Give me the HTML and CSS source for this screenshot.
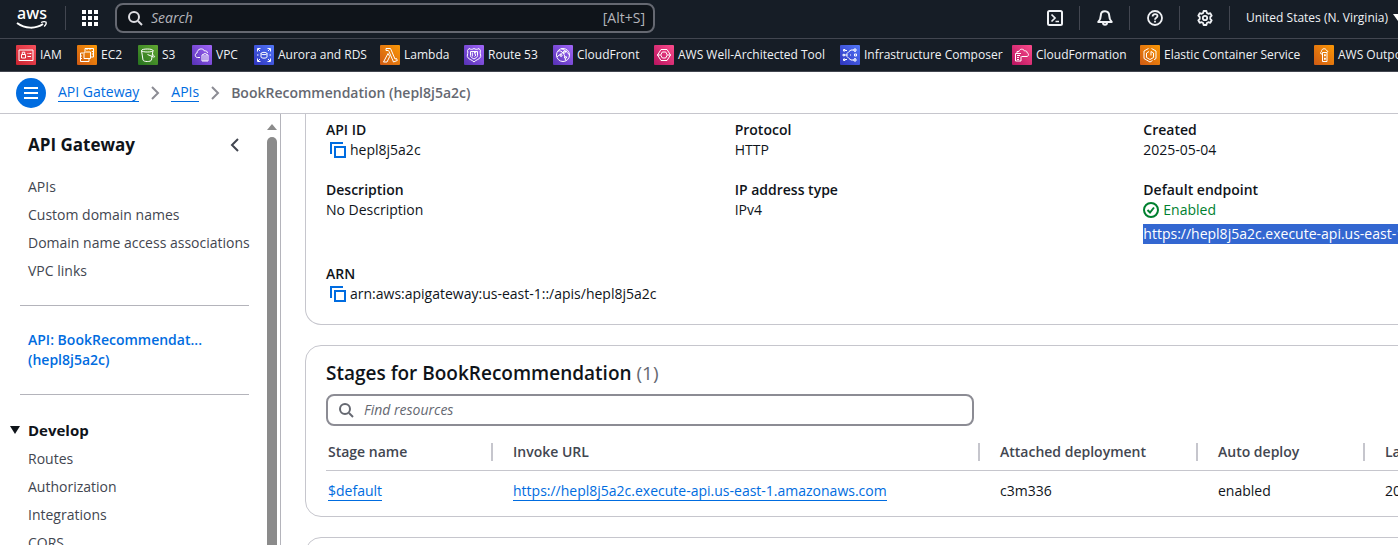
FILE: index.html
```html
<!DOCTYPE html>
<html lang="en">
<head>
<meta charset="utf-8">
<title>API Gateway - BookRecommendation</title>
<link rel="stylesheet" href="styles.css">
</head>
<body>
<svg class="defs" width="0" height="0" aria-hidden="true">
  <defs>
    <linearGradient id="g-red" x1="0" y1="1" x2="1" y2="0"><stop offset="0" stop-color="#c8232f"/><stop offset="1" stop-color="#f8505c"/></linearGradient>
    <linearGradient id="g-orange" x1="0" y1="1" x2="1" y2="0"><stop offset="0" stop-color="#cf5a14"/><stop offset="1" stop-color="#fb9806"/></linearGradient>
    <linearGradient id="g-green" x1="0" y1="1" x2="1" y2="0"><stop offset="0" stop-color="#26721f"/><stop offset="1" stop-color="#62a832"/></linearGradient>
    <linearGradient id="g-purple" x1="0" y1="1" x2="1" y2="0"><stop offset="0" stop-color="#5530b4"/><stop offset="1" stop-color="#a267fa"/></linearGradient>
    <linearGradient id="g-blue" x1="0" y1="1" x2="1" y2="0"><stop offset="0" stop-color="#2f34bd"/><stop offset="1" stop-color="#5278fa"/></linearGradient>
    <linearGradient id="g-pink" x1="0" y1="1" x2="1" y2="0"><stop offset="0" stop-color="#b8135f"/><stop offset="1" stop-color="#fb4c8c"/></linearGradient>
    <symbol id="copy" viewBox="0 0 16 16"><path d="M1 12V1h12M5 5h10v10H5z" fill="none" stroke="currentColor" stroke-width="2"/></symbol>
    <symbol id="search" viewBox="0 0 16 16"><circle cx="7" cy="7" r="5" fill="none" stroke="currentColor" stroke-width="2"/><path d="M11 11l4 4" stroke="currentColor" stroke-width="2"/></symbol>
    <symbol id="chevron" viewBox="0 0 16 16"><path d="M5 2l6 6-6 6" fill="none" stroke="currentColor" stroke-width="2"/></symbol>
  </defs>
</svg>

<header class="topbar">
  <a class="logo" href="#" aria-label="AWS home">
    <svg width="32" height="32" viewBox="0 0 32 32"><text x="16" y="17" text-anchor="middle" class="logo-text">aws</text><path d="M1 21c8 6 19 6 26 1" fill="none" stroke="#fff" stroke-width="2"/><path d="M25 20.500c2-1 4-1 5-.5.500 1-.2 3-1.800 4.500" fill="none" stroke="#fff" stroke-width="1.300"/></svg>
  </a>
  <span class="bar"></span>
  <button class="icon-btn apps" aria-label="Services">
    <svg width="16" height="16" viewBox="0 0 16 16" fill="#fff"><path d="M0 0h4v4H0zM6 0h4v4H6zM12 0h4v4h-4zM0 6h4v4H0zM6 6h4v4H6zM12 6h4v4h-4zM0 12h4v4H0zM6 12h4v4H6zM12 12h4v4h-4z"/></svg>
  </button>
  <label class="global-search">
    <svg width="16" height="16"><use href="#search"/></svg>
    <input type="search" placeholder="Search" aria-label="Search">
    <span>[Alt+S]</span>
  </label>
  <div class="tools">
    <button class="icon-btn" aria-label="CloudShell"><svg width="16" height="16" viewBox="0 0 16 16" fill="none" stroke="#f0f2f5" stroke-width="2"><rect x="1" y="1" width="14" height="14" rx="1.500"/><path d="M4.500 4.500L8 8l-3.500 3.500M8.500 11.500H12" stroke-width="1.700"/></svg></button>
    <span class="bar"></span>
    <button class="icon-btn" aria-label="Notifications"><svg width="16" height="16" viewBox="0 0 16 16" fill="none" stroke="#f0f2f5" stroke-width="2" stroke-linejoin="round"><path d="M8 1.200c-2.800 0-4.200 2-4.200 4.300C3.800 8.500 3 10 1.300 12h13.400C13 10 12.200 8.500 12.200 5.500 12.200 3.200 10.800 1.200 8 1.200z"/><path d="M6 12.500c0 3 4 3 4 0"/></svg></button>
    <span class="bar"></span>
    <button class="icon-btn" aria-label="Help"><svg width="16" height="16" viewBox="0 0 16 16" fill="none" stroke="#f0f2f5" stroke-width="1.800"><circle cx="8" cy="8" r="7"/><path d="M5.600 6.500C5.600 3.200 10.500 3.400 10.500 6c0 1.800-2.500 1.800-2.500 3.800"/><path d="M8 10.800v1.800"/></svg></button>
    <span class="bar"></span>
    <button class="icon-btn" aria-label="Settings"><svg width="16" height="16" viewBox="0 0 16 16" fill="none" stroke="#f0f2f5" stroke-width="1.800" stroke-linejoin="round"><path d="M6.600 1h2.800l.5 1.900 1.500.9 1.900-.6 1.400 2.400L13.300 7v2l1.400 1.400-1.400 2.400-1.900-.6-1.500.9-.5 1.900H6.600l-.5-1.900-1.500-.9-1.900.6-1.400-2.400L2.700 9V7L1.300 5.600l1.400-2.400 1.900.6 1.500-.9z"/><circle cx="8" cy="8" r="2.200"/></svg></button>
    <span class="bar"></span>
    <button class="region">United States (N. Virginia)<svg width="10" height="8" viewBox="0 0 10 8"><path d="M0 0h10L5 7z" fill="#fff"/></svg></button>
  </div>
</header>

<nav class="favorites" aria-label="Favorites">
  <a href="#"><svg viewBox="0 0 20 20"><rect width="20" height="20" rx="1" fill="url(#g-red)"/><path d="M3 5h14v10.500H3zM5.500 9.500h4v3.500h-4zM6.300 9.500V7.200h2.400v2.300M11.500 8.500h1M13.300 8.500h2M11.500 11.500h3.500"/></svg>IAM</a>
  <a href="#"><svg viewBox="0 0 20 20"><rect width="20" height="20" rx="1" fill="url(#g-orange)"/><path d="M8 6V3.500h8.500V12H14M6 8H3.500v8.500H12V14M7 7h6.500v6.500H7zM10 3.500V5M13 3.500V5M14.800 6.500h1.700M14.800 9h1.700M3.500 11H5M3.500 13.500H5"/></svg>EC2</a>
  <a href="#"><svg viewBox="0 0 20 20"><rect width="20" height="20" rx="1" fill="url(#g-green)"/><path d="M3.500 5.500c0-2 11.500-2 11.500 0s-11.500 2-11.500 0zM3.500 5.500L5 15c.5 2 8 2 8.500 0L15 5.500M9.500 9.500l6 2.500c2 .5 1-1.500-1-2.500"/></svg>S3</a>
  <a href="#"><svg viewBox="0 0 20 20"><rect width="20" height="20" rx="1" fill="url(#g-purple)"/><path d="M8 12.500H5.500C2.800 12.500 2.500 8.500 5 8c.2-4.500 6-5.500 7.500-2 2-.5 2.800.5 3 2M10 10l3-1.500 3 1.500v6H10zM12 10v6M14 10v6"/></svg>VPC</a>
  <a href="#"><svg viewBox="0 0 20 20"><rect width="20" height="20" rx="1" fill="url(#g-blue)"/><path d="M3.500 6.500v-3h3M13.500 3.500h3v3M3.500 13.500v3h3M13.500 16.500h3v-3M4 4l2 2M16 4l-2 2M4 16l2-2M16 16l-2-2M7 8.500c0-1.500 6-1.500 6 0s-6 1.500-6 0zM7 8.500v3.500c0 1.500 6 1.500 6 0V8.500M3 10h1.500M15.500 10H17"/></svg>Aurora and RDS</a>
  <a href="#"><svg viewBox="0 0 20 20"><rect width="20" height="20" rx="1" fill="url(#g-orange)"/><path d="M6 3.500h4.500L15 14l1.500-.5 .8 2-3.800 1.500L9 6.500 8.300 5.500H6zM8 8.500L3.500 17H7l2.700-5.500z"/></svg>Lambda</a>
  <a href="#"><svg viewBox="0 0 20 20"><rect width="20" height="20" rx="1" fill="url(#g-purple)"/><path d="M5 3.500c2 1.200 3.500 1 5 0 1.500 1 3 1.200 5 0l1.500 2c-1 2 .5 4 .2 6C16 14.500 12 14.500 10 17c-2-2.500-6-2.500-6.700-5.500-.3-2 1.200-4 .2-6zM6.500 6.500h7v4c0 2-2 2.500-3.500 3.500-1.500-1-3.500-1.500-3.500-3.500zM8.300 7.500v4M10 7.500h1.800L10.500 9l1.500 1-1.500 1.500"/></svg>Route 53</a>
  <a href="#"><svg viewBox="0 0 20 20"><rect width="20" height="20" rx="1" fill="url(#g-purple)"/><path d="M16.500 10a6.500 6.500 0 1 1-13 0 6.500 6.500 0 0 1 13 0zM5 6c4-1 7 3 7.500 9.500M8 3.500c3 1 6 3 8.500 6.500M4 12c3-3 6-5 10-6M8 9.500a1 1 0 1 0 .1 0M11.500 6a1 1 0 1 0 .1 0M12.500 11.500a1 1 0 1 0 .1 0"/></svg>CloudFront</a>
  <a href="#"><svg viewBox="0 0 20 20"><rect width="20" height="20" rx="1" fill="url(#g-pink)"/><path d="M7 4.500h6L16.500 10 13 15.500H7L3.500 10zM8.300 7h3.400l1.600 3-1.600 3H8.300l-1.600-3zM3 10h3.500M13.500 10H17"/></svg>AWS Well-Architected Tool</a>
  <a href="#"><svg viewBox="0 0 20 20"><rect width="20" height="20" rx="1" fill="url(#g-blue)"/><path d="M9 6.500L11 5h3M9 13.500l2 1.500h3M9 6.500l-2 2v3l2 2M7 10H4.500M5 5.500h2M5 14.500h2M14 4h2v2h-2zM14 14h2v2h-2zM14.500 9h2v2h-2zM3.500 4.500h1.500v1.500H3.500zM3.500 14h1.500v1.500H3.500zM3 9.300h1.500v1.500H3zM10 10h1M15 6v1M15 13v1"/></svg>Infrastructure Composer</a>
  <a href="#"><svg viewBox="0 0 20 20"><rect width="20" height="20" rx="1" fill="url(#g-pink)"/><path d="M9 8.500H3.500V16H9v-4.500M5 10.500h3M5 12.500h2M5 14.500h2M7 6.500c.5-3 4.500-3 5.500-.5 2-.5 2.500.5 2.500 1.700 2 .5 2 3.300 0 3.800H9.500M5 8.500V6.500h2"/></svg>CloudFormation</a>
  <a href="#"><svg viewBox="0 0 20 20"><rect width="20" height="20" rx="1" fill="url(#g-orange)"/><path d="M8.500 3.500L4 6v7.500l6 3.500 2.500-1.500M11.500 3.500L16 6v7.500l-2 1.200M9 6.500L6.500 8v4.500L10 14.500l3.500-2V8L11 6.500v4"/></svg>Elastic Container Service</a>
  <a href="#"><svg viewBox="0 0 20 20"><rect width="20" height="20" rx="1" fill="url(#g-orange)"/><path d="M8.500 7.500H13V16.500H8.500zM8.500 9H7C6 8 7 6.500 7.500 6.500 7.500 3 12 3 12.500 5.500c1.500 0 1.500 1.500.5 2M10.500 9.500h.8v1.500h-.8zM10.500 13h.8v1.500h-.8z"/></svg>AWS Outposts</a>
</nav>

<nav class="crumbs" aria-label="Breadcrumbs">
  <button class="menu" aria-label="Open navigation"><svg width="16" height="16" viewBox="0 0 16 16"><path d="M1 3h14M1 8h14M1 13h14" stroke="#fff" stroke-width="2"/></svg></button>
  <a href="#">API Gateway</a>
  <svg width="16" height="16"><use href="#chevron"/></svg>
  <a href="#">APIs</a>
  <svg width="16" height="16"><use href="#chevron"/></svg>
  <strong>BookRecommendation (hepl8j5a2c)</strong>
</nav>

<div class="layout">
  <aside class="side">
    <div class="side-body">
      <div class="side-head">
        <h2>API Gateway</h2>
        <button class="icon-btn" aria-label="Close navigation"><svg width="16" height="16" viewBox="0 0 16 16"><path d="M11 2L5 8l6 6" fill="none" stroke="#424650" stroke-width="2"/></svg></button>
      </div>
      <ul>
        <li><a href="#">APIs</a></li>
        <li><a href="#">Custom domain names</a></li>
        <li><a href="#">Domain name access associations</a></li>
        <li><a href="#">VPC links</a></li>
      </ul>
      <hr>
      <a class="current" href="#">API: BookRecommendat...<br>(hepl8j5a2c)</a>
      <hr>
      <button class="section"><svg width="12" height="10" viewBox="0 0 12 10"><path d="M1 1h10L6 9z" fill="#0f141a"/></svg>Develop</button>
      <ul>
        <li><a href="#">Routes</a></li>
        <li><a href="#">Authorization</a></li>
        <li><a href="#">Integrations</a></li>
        <li><a href="#">CORS</a></li>
      </ul>
    </div>
    <div class="scroll" aria-hidden="true"><svg width="10" height="6" viewBox="0 0 10 6"><path d="M5 0l5 6H0z" fill="#8b8b8b"/></svg><div class="thumb"></div></div>
  </aside>

  <main class="content">
    <section class="card details">
      <dl>
        <div><dt>API ID</dt><dd class="copyable"><button class="copy" aria-label="Copy API ID"><svg width="16" height="16"><use href="#copy"/></svg></button>hepl8j5a2c</dd></div>
        <div><dt>Protocol</dt><dd>HTTP</dd></div>
        <div><dt>Created</dt><dd>2025-05-04</dd></div>
        <div><dt>Description</dt><dd>No Description</dd></div>
        <div><dt>IP address type</dt><dd>IPv4</dd></div>
        <div><dt>Default endpoint</dt><dd class="enabled"><svg width="16" height="16" viewBox="0 0 16 16" fill="none" stroke="currentColor" stroke-width="2"><circle cx="8" cy="8" r="7"/><path d="M4.500 8l2.500 2.500L11 5.500"/></svg>Enabled</dd><dd class="endpoint"><mark>https://hepl8j5a2c.execute-api.us-east-1.amazonaws.com</mark></dd></div>
        <div><dt>ARN</dt><dd class="copyable"><button class="copy" aria-label="Copy ARN"><svg width="16" height="16"><use href="#copy"/></svg></button>arn:aws:apigateway:us-east-1::/apis/hepl8j5a2c</dd></div>
      </dl>
    </section>

    <section class="card stages">
      <h2>Stages for BookRecommendation <span>(1)</span></h2>
      <label class="find">
        <svg width="16" height="16"><use href="#search"/></svg>
        <input type="search" placeholder="Find resources" aria-label="Find resources">
      </label>
      <table>
        <colgroup><col class="c-stage"><col class="c-url"><col class="c-dep"><col class="c-auto"><col></colgroup>
        <thead><tr><th>Stage name</th><th>Invoke URL</th><th>Attached deployment</th><th>Auto deploy</th><th>Last updated</th></tr></thead>
        <tbody><tr><td><a href="#">$default</a></td><td><a href="#">https://hepl8j5a2c.execute-api.us-east-1.amazonaws.com</a></td><td>c3m336</td><td>enabled</td><td>2025-05-04</td></tr></tbody>
      </table>
    </section>

    <section class="card next"></section>
  </main>
</div>
</body>
</html>
```
FILE: styles.css
```css
* { box-sizing: border-box; }
html, body { height: 100%; }
body {
  margin: 0;
  display: flex;
  flex-direction: column;
  overflow: hidden;
  background: #fff;
  color: #0f141a;
  font: 14px/20px "Open Sans", "Noto Sans", sans-serif;
}
button, input { font: inherit; color: inherit; background: none; border: 0; padding: 0; margin: 0; }
a { color: #006ce0; text-decoration: none; }
svg { display: block; flex: none; }
h2, dl, dd, ul { margin: 0; padding: 0; }
ul { list-style: none; }
.defs { position: absolute; }

.topbar {
  flex: none;
  display: flex;
  align-items: center;
  height: 39px;
  padding-left: 16px;
  padding-bottom: 2px;
  background: #161d26;
  border-bottom: 1px solid #424650;
  color: #f0f2f5;
  white-space: nowrap;
}
.logo { padding-right: 17px; }
.logo-text { font: 500 16px/20px "Noto Sans", sans-serif; fill: #fff; }
.bar { flex: none; width: 1px; height: 24px; background: #424650; }
.icon-btn { display: flex; padding: 0 16px 0 17px; }
.apps { padding: 0 17px 0 16px; }
.global-search {
  display: flex;
  align-items: center;
  gap: 8px;
  width: 540px;
  height: 30px;
  padding: 0 8px 0 10px;
  border: 2px solid #656871;
  border-radius: 8px;
  background: #0f141a;
  color: #b4b4bb;
}
.global-search svg { color: #dedee3; }
.global-search input, .find input { flex: 1; min-width: 0; outline: 0; }
input::placeholder { color: inherit; font-style: italic; opacity: 1; }
.tools { display: flex; align-items: center; margin-left: auto; margin-right: -5px; }
.region { display: flex; align-items: center; gap: 5px; padding-left: 16px; font-size: 12px; font-weight: 500; }

.favorites {
  flex: none;
  display: grid;
  grid-template-columns: 61px 61px 54px 62px 126px 84px 89px 101px 186px 172px 128px 174px 120px;
  align-items: center;
  height: 33px;
  padding-left: 16px;
  background: #161d26;
  border-bottom: 1px solid #424650;
}
.favorites a { display: flex; align-items: center; gap: 4px; color: #f0f2f5; font-size: 12px; font-weight: 500; white-space: nowrap; }
.favorites svg { width: 20px; height: 20px; }
.favorites path { fill: none; stroke: #fff; stroke-width: 1; }

.crumbs {
  flex: none;
  display: flex;
  align-items: center;
  gap: 8px;
  height: 42px;
  padding-left: 16px;
  border-bottom: 1px solid #c6c6cd;
  color: #8c8c94;
}
.crumbs a, td a { border-bottom: 1px solid #006ce0; line-height: 18px; }
.crumbs strong { color: #656871; font-weight: 600; }
.menu { display: grid; place-items: center; width: 30px; height: 30px; margin-right: 4px; border-radius: 50%; background: #006ce0; }

.layout { flex: 1; display: flex; min-height: 0; }
.side { flex: none; display: flex; width: 281px; overflow: hidden; border-right: 1px solid #b4b4bb; }
.side-body { flex: 1; padding-top: 20px; }
.side-head { display: flex; justify-content: space-between; align-items: center; padding: 0 15px 0 28px; margin-bottom: 17px; }
.side-head h2 { font-size: 17px; line-height: 22px; font-weight: 700; }
.side-head .icon-btn { padding: 0 9px; }
.side li { padding: 4px 0 4px 28px; white-space: nowrap; }
.side li a { color: #424650; }
.side hr { margin: 20px 18px 24px 20px; border: 0; border-top: 1px solid #b4b4bb; }
.current { display: block; padding-left: 28px; font-weight: 600; white-space: nowrap; }
.current + hr { margin-bottom: 25px; margin-top: 24px; }
.section { display: flex; align-items: center; gap: 7px; padding-left: 9px; margin-bottom: 5px; font-size: 15px; font-weight: 700; }
.scroll { flex: none; display: flex; flex-direction: column; gap: 7px; width: 13px; padding-top: 10px; }
.thumb { flex: 1; width: 10px; border-radius: 5px 5px 0 0; background: #8b8b8b; }

.content { flex: 1; min-width: 0; padding-left: 24px; overflow: hidden; }
.card { min-width: 1248px; margin-bottom: 20px; padding: 0 20px; border: 1px solid #c6c6cd; border-radius: 16px; }
.details { padding-top: 6px; padding-bottom: 20px; border-top: 0; border-radius: 0 0 16px 16px; }
.details dl { display: grid; grid-template-columns: repeat(3, 1fr); gap: 20px; }
dt { font-weight: 600; }
.copyable, .enabled { display: flex; align-items: center; gap: 4px; }
.copy { display: flex; padding-left: 4px; color: #006ce0; }
.enabled { color: #00802f; }
.endpoint { margin-top: 4px; white-space: nowrap; }
.endpoint mark { display: inline-block; background: #3367d1; color: #fff; }

.stages { padding-top: 15px; padding-bottom: 5px; }
.stages h2 { font-size: 19px; line-height: 24px; font-weight: 600; }
.stages h2 span { color: #656871; font-weight: 400; }
.find {
  display: flex;
  align-items: center;
  gap: 10px;
  width: 648px;
  height: 32px;
  margin-top: 9px;
  padding: 0 10px;
  border: 2px solid #8c8c94;
  border-radius: 8px;
  color: #656871;
}
table { width: 100%; margin-top: 8px; border-collapse: collapse; table-layout: fixed; }
.c-stage { width: 167px; }
.c-url { width: 487px; }
.c-dep { width: 218px; }
.c-auto { width: 167px; }
th, td { padding: 0 20px; text-align: left; white-space: nowrap; }
th:first-child, td:first-child { padding-left: 2px; }
th { height: 36px; border-bottom: 1px solid #c6c6cd; color: #424650; font-weight: 600; background: linear-gradient(#c6c6cd, #c6c6cd) right center / 2px 18px no-repeat; }
th:last-child { background: none; }
td { height: 41px; }
.next { height: 60px; }
```
